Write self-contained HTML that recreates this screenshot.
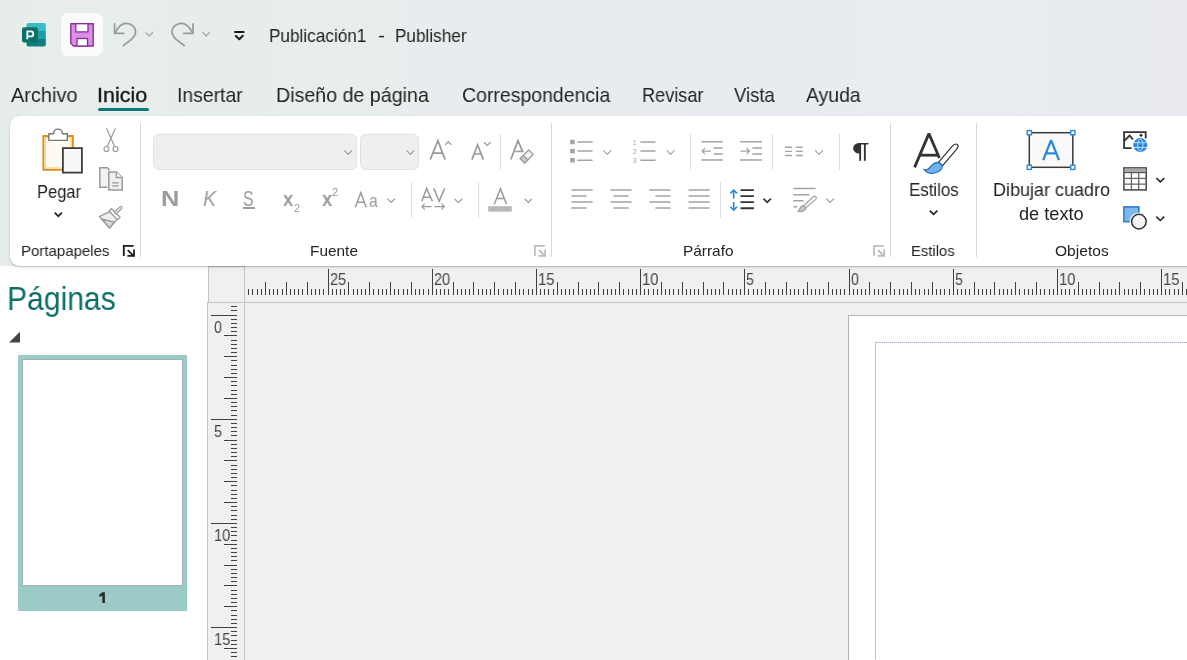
<!DOCTYPE html>
<html><head><meta charset="utf-8">
<style>
*{margin:0;padding:0;box-sizing:border-box}
html,body{width:1187px;height:660px;overflow:hidden;font-family:"Liberation Sans",sans-serif;color:#242424}
body{position:relative;background:linear-gradient(90deg,#e7eeea 0%,#e8ecee 40%,#e8ecf0 60%,#e9ebf0 100%)}
.a{position:absolute}
.t{position:absolute;white-space:nowrap;line-height:1;transform-origin:0 0;will-change:transform}
svg{position:absolute;overflow:visible;will-change:transform}
#ribbon{position:absolute;left:10px;top:116px;width:1200px;height:150px;background:#fff;border-radius:9px;box-shadow:0 0 1px rgba(0,0,0,.16),0 1px 1.5px rgba(0,0,0,.2),0 2px 5px rgba(0,0,0,.07)}
.sep{position:absolute;width:1px;background:#d9d9d9}

</style></head><body>
<div class="a" style="left:61px;top:13px;width:42px;height:43px;background:#fbfbfb;border-radius:7px"></div>
<div class="t" style="left:268.98px;top:26.51px;font-size:18.17px;font-weight:normal;font-style:normal;color:#242424;transform:scaleX(0.9458);">Publicación1</div>
<div class="t" style="left:377.64px;top:26.51px;font-size:18.17px;font-weight:normal;font-style:normal;color:#242424;transform:scaleX(1.1682);">-</div>
<div class="t" style="left:394.78px;top:26.51px;font-size:18.17px;font-weight:normal;font-style:normal;color:#242424;transform:scaleX(0.9453);">Publisher</div>
<div class="t" style="left:11.15px;top:85.31px;font-size:20.06px;font-weight:normal;font-style:normal;color:#242424;transform:scaleX(0.9941);">Archivo</div>
<div class="t" style="left:176.81px;top:85.31px;font-size:20.06px;font-weight:normal;font-style:normal;color:#242424;transform:scaleX(0.9660);">Insertar</div>
<div class="t" style="left:275.78px;top:85.31px;font-size:20.06px;font-weight:normal;font-style:normal;color:#242424;transform:scaleX(0.9793);">Diseño de página</div>
<div class="t" style="left:462.23px;top:85.31px;font-size:20.06px;font-weight:normal;font-style:normal;color:#242424;transform:scaleX(0.9711);">Correspondencia</div>
<div class="t" style="left:641.50px;top:85.31px;font-size:20.06px;font-weight:normal;font-style:normal;color:#242424;transform:scaleX(0.9040);">Revisar</div>
<div class="t" style="left:733.51px;top:85.31px;font-size:20.06px;font-weight:normal;font-style:normal;color:#242424;transform:scaleX(0.9213);">Vista</div>
<div class="t" style="left:805.85px;top:85.31px;font-size:20.06px;font-weight:normal;font-style:normal;color:#242424;transform:scaleX(0.9679);">Ayuda</div>
<div class="t" style="left:96.61px;top:85.31px;font-size:20.06px;font-weight:normal;font-style:normal;color:#1b1b1b;transform:scaleX(1.0742);-webkit-text-stroke:0.35px #1b1b1b;">Inicio</div>
<div class="a" style="left:98px;top:107.5px;width:51px;height:3px;border-radius:2px;background:#0f7a7e"></div>
<div class="a" style="left:0;top:266px;width:1187px;height:394px;background:#fff"></div>
<div class="a" style="left:245px;top:303px;width:942px;height:357px;background:#f0f0f0"></div>
<div class="a" style="left:848px;top:315px;width:400px;height:400px;background:#fff;border:1px solid #b4b4b4"></div>
<div class="a" style="left:208px;top:266px;width:979px;height:37px;background:#f0f0f0"></div>
<div class="a" style="left:208px;top:266px;width:37px;height:394px;background:#f0f0f0"></div>
<svg width="1187" height="660" style="left:0;top:0" viewBox="0 0 1187 660" shape-rendering="crispEdges">
<rect x="208" y="266" width="1" height="37" fill="#c6c6c6"/>
<rect x="207" y="302" width="1" height="358" fill="#c6c6c6"/>
<rect x="244" y="266" width="1" height="394" fill="#c6c6c6"/>
<rect x="208" y="266" width="37" height="1" fill="#c6c6c6"/>
<rect x="207" y="302" width="980" height="1" fill="#c6c6c6"/>
<rect x="875" y="342" width="312" height="1" fill="#d0ebf8"/><rect x="875" y="342" width="1" height="318" fill="#d0ebf8"/><rect x="876" y="342" width="1" height="1" fill="#a3a8c6"/><rect x="878" y="342" width="1" height="1" fill="#a3a8c6"/><rect x="880" y="342" width="1" height="1" fill="#a3a8c6"/><rect x="882" y="342" width="1" height="1" fill="#a3a8c6"/><rect x="884" y="342" width="1" height="1" fill="#a3a8c6"/><rect x="886" y="342" width="1" height="1" fill="#a3a8c6"/><rect x="888" y="342" width="1" height="1" fill="#a3a8c6"/><rect x="890" y="342" width="1" height="1" fill="#a3a8c6"/><rect x="892" y="342" width="1" height="1" fill="#a3a8c6"/><rect x="894" y="342" width="1" height="1" fill="#a3a8c6"/><rect x="896" y="342" width="1" height="1" fill="#a3a8c6"/><rect x="898" y="342" width="1" height="1" fill="#a3a8c6"/><rect x="900" y="342" width="1" height="1" fill="#a3a8c6"/><rect x="902" y="342" width="1" height="1" fill="#a3a8c6"/><rect x="904" y="342" width="1" height="1" fill="#a3a8c6"/><rect x="906" y="342" width="1" height="1" fill="#a3a8c6"/><rect x="908" y="342" width="1" height="1" fill="#a3a8c6"/><rect x="910" y="342" width="1" height="1" fill="#a3a8c6"/><rect x="912" y="342" width="1" height="1" fill="#a3a8c6"/><rect x="914" y="342" width="1" height="1" fill="#a3a8c6"/><rect x="916" y="342" width="1" height="1" fill="#a3a8c6"/><rect x="918" y="342" width="1" height="1" fill="#a3a8c6"/><rect x="920" y="342" width="1" height="1" fill="#a3a8c6"/><rect x="922" y="342" width="1" height="1" fill="#a3a8c6"/><rect x="924" y="342" width="1" height="1" fill="#a3a8c6"/><rect x="926" y="342" width="1" height="1" fill="#a3a8c6"/><rect x="928" y="342" width="1" height="1" fill="#a3a8c6"/><rect x="930" y="342" width="1" height="1" fill="#a3a8c6"/><rect x="932" y="342" width="1" height="1" fill="#a3a8c6"/><rect x="934" y="342" width="1" height="1" fill="#a3a8c6"/><rect x="936" y="342" width="1" height="1" fill="#a3a8c6"/><rect x="938" y="342" width="1" height="1" fill="#a3a8c6"/><rect x="940" y="342" width="1" height="1" fill="#a3a8c6"/><rect x="942" y="342" width="1" height="1" fill="#a3a8c6"/><rect x="944" y="342" width="1" height="1" fill="#a3a8c6"/><rect x="946" y="342" width="1" height="1" fill="#a3a8c6"/><rect x="948" y="342" width="1" height="1" fill="#a3a8c6"/><rect x="950" y="342" width="1" height="1" fill="#a3a8c6"/><rect x="952" y="342" width="1" height="1" fill="#a3a8c6"/><rect x="954" y="342" width="1" height="1" fill="#a3a8c6"/><rect x="956" y="342" width="1" height="1" fill="#a3a8c6"/><rect x="958" y="342" width="1" height="1" fill="#a3a8c6"/><rect x="960" y="342" width="1" height="1" fill="#a3a8c6"/><rect x="962" y="342" width="1" height="1" fill="#a3a8c6"/><rect x="964" y="342" width="1" height="1" fill="#a3a8c6"/><rect x="966" y="342" width="1" height="1" fill="#a3a8c6"/><rect x="968" y="342" width="1" height="1" fill="#a3a8c6"/><rect x="970" y="342" width="1" height="1" fill="#a3a8c6"/><rect x="972" y="342" width="1" height="1" fill="#a3a8c6"/><rect x="974" y="342" width="1" height="1" fill="#a3a8c6"/><rect x="976" y="342" width="1" height="1" fill="#a3a8c6"/><rect x="978" y="342" width="1" height="1" fill="#a3a8c6"/><rect x="980" y="342" width="1" height="1" fill="#a3a8c6"/><rect x="982" y="342" width="1" height="1" fill="#a3a8c6"/><rect x="984" y="342" width="1" height="1" fill="#a3a8c6"/><rect x="986" y="342" width="1" height="1" fill="#a3a8c6"/><rect x="988" y="342" width="1" height="1" fill="#a3a8c6"/><rect x="990" y="342" width="1" height="1" fill="#a3a8c6"/><rect x="992" y="342" width="1" height="1" fill="#a3a8c6"/><rect x="994" y="342" width="1" height="1" fill="#a3a8c6"/><rect x="996" y="342" width="1" height="1" fill="#a3a8c6"/><rect x="998" y="342" width="1" height="1" fill="#a3a8c6"/><rect x="1000" y="342" width="1" height="1" fill="#a3a8c6"/><rect x="1002" y="342" width="1" height="1" fill="#a3a8c6"/><rect x="1004" y="342" width="1" height="1" fill="#a3a8c6"/><rect x="1006" y="342" width="1" height="1" fill="#a3a8c6"/><rect x="1008" y="342" width="1" height="1" fill="#a3a8c6"/><rect x="1010" y="342" width="1" height="1" fill="#a3a8c6"/><rect x="1012" y="342" width="1" height="1" fill="#a3a8c6"/><rect x="1014" y="342" width="1" height="1" fill="#a3a8c6"/><rect x="1016" y="342" width="1" height="1" fill="#a3a8c6"/><rect x="1018" y="342" width="1" height="1" fill="#a3a8c6"/><rect x="1020" y="342" width="1" height="1" fill="#a3a8c6"/><rect x="1022" y="342" width="1" height="1" fill="#a3a8c6"/><rect x="1024" y="342" width="1" height="1" fill="#a3a8c6"/><rect x="1026" y="342" width="1" height="1" fill="#a3a8c6"/><rect x="1028" y="342" width="1" height="1" fill="#a3a8c6"/><rect x="1030" y="342" width="1" height="1" fill="#a3a8c6"/><rect x="1032" y="342" width="1" height="1" fill="#a3a8c6"/><rect x="1034" y="342" width="1" height="1" fill="#a3a8c6"/><rect x="1036" y="342" width="1" height="1" fill="#a3a8c6"/><rect x="1038" y="342" width="1" height="1" fill="#a3a8c6"/><rect x="1040" y="342" width="1" height="1" fill="#a3a8c6"/><rect x="1042" y="342" width="1" height="1" fill="#a3a8c6"/><rect x="1044" y="342" width="1" height="1" fill="#a3a8c6"/><rect x="1046" y="342" width="1" height="1" fill="#a3a8c6"/><rect x="1048" y="342" width="1" height="1" fill="#a3a8c6"/><rect x="1050" y="342" width="1" height="1" fill="#a3a8c6"/><rect x="1052" y="342" width="1" height="1" fill="#a3a8c6"/><rect x="1054" y="342" width="1" height="1" fill="#a3a8c6"/><rect x="1056" y="342" width="1" height="1" fill="#a3a8c6"/><rect x="1058" y="342" width="1" height="1" fill="#a3a8c6"/><rect x="1060" y="342" width="1" height="1" fill="#a3a8c6"/><rect x="1062" y="342" width="1" height="1" fill="#a3a8c6"/><rect x="1064" y="342" width="1" height="1" fill="#a3a8c6"/><rect x="1066" y="342" width="1" height="1" fill="#a3a8c6"/><rect x="1068" y="342" width="1" height="1" fill="#a3a8c6"/><rect x="1070" y="342" width="1" height="1" fill="#a3a8c6"/><rect x="1072" y="342" width="1" height="1" fill="#a3a8c6"/><rect x="1074" y="342" width="1" height="1" fill="#a3a8c6"/><rect x="1076" y="342" width="1" height="1" fill="#a3a8c6"/><rect x="1078" y="342" width="1" height="1" fill="#a3a8c6"/><rect x="1080" y="342" width="1" height="1" fill="#a3a8c6"/><rect x="1082" y="342" width="1" height="1" fill="#a3a8c6"/><rect x="1084" y="342" width="1" height="1" fill="#a3a8c6"/><rect x="1086" y="342" width="1" height="1" fill="#a3a8c6"/><rect x="1088" y="342" width="1" height="1" fill="#a3a8c6"/><rect x="1090" y="342" width="1" height="1" fill="#a3a8c6"/><rect x="1092" y="342" width="1" height="1" fill="#a3a8c6"/><rect x="1094" y="342" width="1" height="1" fill="#a3a8c6"/><rect x="1096" y="342" width="1" height="1" fill="#a3a8c6"/><rect x="1098" y="342" width="1" height="1" fill="#a3a8c6"/><rect x="1100" y="342" width="1" height="1" fill="#a3a8c6"/><rect x="1102" y="342" width="1" height="1" fill="#a3a8c6"/><rect x="1104" y="342" width="1" height="1" fill="#a3a8c6"/><rect x="1106" y="342" width="1" height="1" fill="#a3a8c6"/><rect x="1108" y="342" width="1" height="1" fill="#a3a8c6"/><rect x="1110" y="342" width="1" height="1" fill="#a3a8c6"/><rect x="1112" y="342" width="1" height="1" fill="#a3a8c6"/><rect x="1114" y="342" width="1" height="1" fill="#a3a8c6"/><rect x="1116" y="342" width="1" height="1" fill="#a3a8c6"/><rect x="1118" y="342" width="1" height="1" fill="#a3a8c6"/><rect x="1120" y="342" width="1" height="1" fill="#a3a8c6"/><rect x="1122" y="342" width="1" height="1" fill="#a3a8c6"/><rect x="1124" y="342" width="1" height="1" fill="#a3a8c6"/><rect x="1126" y="342" width="1" height="1" fill="#a3a8c6"/><rect x="1128" y="342" width="1" height="1" fill="#a3a8c6"/><rect x="1130" y="342" width="1" height="1" fill="#a3a8c6"/><rect x="1132" y="342" width="1" height="1" fill="#a3a8c6"/><rect x="1134" y="342" width="1" height="1" fill="#a3a8c6"/><rect x="1136" y="342" width="1" height="1" fill="#a3a8c6"/><rect x="1138" y="342" width="1" height="1" fill="#a3a8c6"/><rect x="1140" y="342" width="1" height="1" fill="#a3a8c6"/><rect x="1142" y="342" width="1" height="1" fill="#a3a8c6"/><rect x="1144" y="342" width="1" height="1" fill="#a3a8c6"/><rect x="1146" y="342" width="1" height="1" fill="#a3a8c6"/><rect x="1148" y="342" width="1" height="1" fill="#a3a8c6"/><rect x="1150" y="342" width="1" height="1" fill="#a3a8c6"/><rect x="1152" y="342" width="1" height="1" fill="#a3a8c6"/><rect x="1154" y="342" width="1" height="1" fill="#a3a8c6"/><rect x="1156" y="342" width="1" height="1" fill="#a3a8c6"/><rect x="1158" y="342" width="1" height="1" fill="#a3a8c6"/><rect x="1160" y="342" width="1" height="1" fill="#a3a8c6"/><rect x="1162" y="342" width="1" height="1" fill="#a3a8c6"/><rect x="1164" y="342" width="1" height="1" fill="#a3a8c6"/><rect x="1166" y="342" width="1" height="1" fill="#a3a8c6"/><rect x="1168" y="342" width="1" height="1" fill="#a3a8c6"/><rect x="1170" y="342" width="1" height="1" fill="#a3a8c6"/><rect x="1172" y="342" width="1" height="1" fill="#a3a8c6"/><rect x="1174" y="342" width="1" height="1" fill="#a3a8c6"/><rect x="1176" y="342" width="1" height="1" fill="#a3a8c6"/><rect x="1178" y="342" width="1" height="1" fill="#a3a8c6"/><rect x="1180" y="342" width="1" height="1" fill="#a3a8c6"/><rect x="1182" y="342" width="1" height="1" fill="#a3a8c6"/><rect x="1184" y="342" width="1" height="1" fill="#a3a8c6"/><rect x="1186" y="342" width="1" height="1" fill="#a3a8c6"/><rect x="875" y="342" width="1" height="1" fill="#a3a8c6"/><rect x="875" y="344" width="1" height="1" fill="#a3a8c6"/><rect x="875" y="346" width="1" height="1" fill="#a3a8c6"/><rect x="875" y="348" width="1" height="1" fill="#a3a8c6"/><rect x="875" y="350" width="1" height="1" fill="#a3a8c6"/><rect x="875" y="352" width="1" height="1" fill="#a3a8c6"/><rect x="875" y="354" width="1" height="1" fill="#a3a8c6"/><rect x="875" y="356" width="1" height="1" fill="#a3a8c6"/><rect x="875" y="358" width="1" height="1" fill="#a3a8c6"/><rect x="875" y="360" width="1" height="1" fill="#a3a8c6"/><rect x="875" y="362" width="1" height="1" fill="#a3a8c6"/><rect x="875" y="364" width="1" height="1" fill="#a3a8c6"/><rect x="875" y="366" width="1" height="1" fill="#a3a8c6"/><rect x="875" y="368" width="1" height="1" fill="#a3a8c6"/><rect x="875" y="370" width="1" height="1" fill="#a3a8c6"/><rect x="875" y="372" width="1" height="1" fill="#a3a8c6"/><rect x="875" y="374" width="1" height="1" fill="#a3a8c6"/><rect x="875" y="376" width="1" height="1" fill="#a3a8c6"/><rect x="875" y="378" width="1" height="1" fill="#a3a8c6"/><rect x="875" y="380" width="1" height="1" fill="#a3a8c6"/><rect x="875" y="382" width="1" height="1" fill="#a3a8c6"/><rect x="875" y="384" width="1" height="1" fill="#a3a8c6"/><rect x="875" y="386" width="1" height="1" fill="#a3a8c6"/><rect x="875" y="388" width="1" height="1" fill="#a3a8c6"/><rect x="875" y="390" width="1" height="1" fill="#a3a8c6"/><rect x="875" y="392" width="1" height="1" fill="#a3a8c6"/><rect x="875" y="394" width="1" height="1" fill="#a3a8c6"/><rect x="875" y="396" width="1" height="1" fill="#a3a8c6"/><rect x="875" y="398" width="1" height="1" fill="#a3a8c6"/><rect x="875" y="400" width="1" height="1" fill="#a3a8c6"/><rect x="875" y="402" width="1" height="1" fill="#a3a8c6"/><rect x="875" y="404" width="1" height="1" fill="#a3a8c6"/><rect x="875" y="406" width="1" height="1" fill="#a3a8c6"/><rect x="875" y="408" width="1" height="1" fill="#a3a8c6"/><rect x="875" y="410" width="1" height="1" fill="#a3a8c6"/><rect x="875" y="412" width="1" height="1" fill="#a3a8c6"/><rect x="875" y="414" width="1" height="1" fill="#a3a8c6"/><rect x="875" y="416" width="1" height="1" fill="#a3a8c6"/><rect x="875" y="418" width="1" height="1" fill="#a3a8c6"/><rect x="875" y="420" width="1" height="1" fill="#a3a8c6"/><rect x="875" y="422" width="1" height="1" fill="#a3a8c6"/><rect x="875" y="424" width="1" height="1" fill="#a3a8c6"/><rect x="875" y="426" width="1" height="1" fill="#a3a8c6"/><rect x="875" y="428" width="1" height="1" fill="#a3a8c6"/><rect x="875" y="430" width="1" height="1" fill="#a3a8c6"/><rect x="875" y="432" width="1" height="1" fill="#a3a8c6"/><rect x="875" y="434" width="1" height="1" fill="#a3a8c6"/><rect x="875" y="436" width="1" height="1" fill="#a3a8c6"/><rect x="875" y="438" width="1" height="1" fill="#a3a8c6"/><rect x="875" y="440" width="1" height="1" fill="#a3a8c6"/><rect x="875" y="442" width="1" height="1" fill="#a3a8c6"/><rect x="875" y="444" width="1" height="1" fill="#a3a8c6"/><rect x="875" y="446" width="1" height="1" fill="#a3a8c6"/><rect x="875" y="448" width="1" height="1" fill="#a3a8c6"/><rect x="875" y="450" width="1" height="1" fill="#a3a8c6"/><rect x="875" y="452" width="1" height="1" fill="#a3a8c6"/><rect x="875" y="454" width="1" height="1" fill="#a3a8c6"/><rect x="875" y="456" width="1" height="1" fill="#a3a8c6"/><rect x="875" y="458" width="1" height="1" fill="#a3a8c6"/><rect x="875" y="460" width="1" height="1" fill="#a3a8c6"/><rect x="875" y="462" width="1" height="1" fill="#a3a8c6"/><rect x="875" y="464" width="1" height="1" fill="#a3a8c6"/><rect x="875" y="466" width="1" height="1" fill="#a3a8c6"/><rect x="875" y="468" width="1" height="1" fill="#a3a8c6"/><rect x="875" y="470" width="1" height="1" fill="#a3a8c6"/><rect x="875" y="472" width="1" height="1" fill="#a3a8c6"/><rect x="875" y="474" width="1" height="1" fill="#a3a8c6"/><rect x="875" y="476" width="1" height="1" fill="#a3a8c6"/><rect x="875" y="478" width="1" height="1" fill="#a3a8c6"/><rect x="875" y="480" width="1" height="1" fill="#a3a8c6"/><rect x="875" y="482" width="1" height="1" fill="#a3a8c6"/><rect x="875" y="484" width="1" height="1" fill="#a3a8c6"/><rect x="875" y="486" width="1" height="1" fill="#a3a8c6"/><rect x="875" y="488" width="1" height="1" fill="#a3a8c6"/><rect x="875" y="490" width="1" height="1" fill="#a3a8c6"/><rect x="875" y="492" width="1" height="1" fill="#a3a8c6"/><rect x="875" y="494" width="1" height="1" fill="#a3a8c6"/><rect x="875" y="496" width="1" height="1" fill="#a3a8c6"/><rect x="875" y="498" width="1" height="1" fill="#a3a8c6"/><rect x="875" y="500" width="1" height="1" fill="#a3a8c6"/><rect x="875" y="502" width="1" height="1" fill="#a3a8c6"/><rect x="875" y="504" width="1" height="1" fill="#a3a8c6"/><rect x="875" y="506" width="1" height="1" fill="#a3a8c6"/><rect x="875" y="508" width="1" height="1" fill="#a3a8c6"/><rect x="875" y="510" width="1" height="1" fill="#a3a8c6"/><rect x="875" y="512" width="1" height="1" fill="#a3a8c6"/><rect x="875" y="514" width="1" height="1" fill="#a3a8c6"/><rect x="875" y="516" width="1" height="1" fill="#a3a8c6"/><rect x="875" y="518" width="1" height="1" fill="#a3a8c6"/><rect x="875" y="520" width="1" height="1" fill="#a3a8c6"/><rect x="875" y="522" width="1" height="1" fill="#a3a8c6"/><rect x="875" y="524" width="1" height="1" fill="#a3a8c6"/><rect x="875" y="526" width="1" height="1" fill="#a3a8c6"/><rect x="875" y="528" width="1" height="1" fill="#a3a8c6"/><rect x="875" y="530" width="1" height="1" fill="#a3a8c6"/><rect x="875" y="532" width="1" height="1" fill="#a3a8c6"/><rect x="875" y="534" width="1" height="1" fill="#a3a8c6"/><rect x="875" y="536" width="1" height="1" fill="#a3a8c6"/><rect x="875" y="538" width="1" height="1" fill="#a3a8c6"/><rect x="875" y="540" width="1" height="1" fill="#a3a8c6"/><rect x="875" y="542" width="1" height="1" fill="#a3a8c6"/><rect x="875" y="544" width="1" height="1" fill="#a3a8c6"/><rect x="875" y="546" width="1" height="1" fill="#a3a8c6"/><rect x="875" y="548" width="1" height="1" fill="#a3a8c6"/><rect x="875" y="550" width="1" height="1" fill="#a3a8c6"/><rect x="875" y="552" width="1" height="1" fill="#a3a8c6"/><rect x="875" y="554" width="1" height="1" fill="#a3a8c6"/><rect x="875" y="556" width="1" height="1" fill="#a3a8c6"/><rect x="875" y="558" width="1" height="1" fill="#a3a8c6"/><rect x="875" y="560" width="1" height="1" fill="#a3a8c6"/><rect x="875" y="562" width="1" height="1" fill="#a3a8c6"/><rect x="875" y="564" width="1" height="1" fill="#a3a8c6"/><rect x="875" y="566" width="1" height="1" fill="#a3a8c6"/><rect x="875" y="568" width="1" height="1" fill="#a3a8c6"/><rect x="875" y="570" width="1" height="1" fill="#a3a8c6"/><rect x="875" y="572" width="1" height="1" fill="#a3a8c6"/><rect x="875" y="574" width="1" height="1" fill="#a3a8c6"/><rect x="875" y="576" width="1" height="1" fill="#a3a8c6"/><rect x="875" y="578" width="1" height="1" fill="#a3a8c6"/><rect x="875" y="580" width="1" height="1" fill="#a3a8c6"/><rect x="875" y="582" width="1" height="1" fill="#a3a8c6"/><rect x="875" y="584" width="1" height="1" fill="#a3a8c6"/><rect x="875" y="586" width="1" height="1" fill="#a3a8c6"/><rect x="875" y="588" width="1" height="1" fill="#a3a8c6"/><rect x="875" y="590" width="1" height="1" fill="#a3a8c6"/><rect x="875" y="592" width="1" height="1" fill="#a3a8c6"/><rect x="875" y="594" width="1" height="1" fill="#a3a8c6"/><rect x="875" y="596" width="1" height="1" fill="#a3a8c6"/><rect x="875" y="598" width="1" height="1" fill="#a3a8c6"/><rect x="875" y="600" width="1" height="1" fill="#a3a8c6"/><rect x="875" y="602" width="1" height="1" fill="#a3a8c6"/><rect x="875" y="604" width="1" height="1" fill="#a3a8c6"/><rect x="875" y="606" width="1" height="1" fill="#a3a8c6"/><rect x="875" y="608" width="1" height="1" fill="#a3a8c6"/><rect x="875" y="610" width="1" height="1" fill="#a3a8c6"/><rect x="875" y="612" width="1" height="1" fill="#a3a8c6"/><rect x="875" y="614" width="1" height="1" fill="#a3a8c6"/><rect x="875" y="616" width="1" height="1" fill="#a3a8c6"/><rect x="875" y="618" width="1" height="1" fill="#a3a8c6"/><rect x="875" y="620" width="1" height="1" fill="#a3a8c6"/><rect x="875" y="622" width="1" height="1" fill="#a3a8c6"/><rect x="875" y="624" width="1" height="1" fill="#a3a8c6"/><rect x="875" y="626" width="1" height="1" fill="#a3a8c6"/><rect x="875" y="628" width="1" height="1" fill="#a3a8c6"/><rect x="875" y="630" width="1" height="1" fill="#a3a8c6"/><rect x="875" y="632" width="1" height="1" fill="#a3a8c6"/><rect x="875" y="634" width="1" height="1" fill="#a3a8c6"/><rect x="875" y="636" width="1" height="1" fill="#a3a8c6"/><rect x="875" y="638" width="1" height="1" fill="#a3a8c6"/><rect x="875" y="640" width="1" height="1" fill="#a3a8c6"/><rect x="875" y="642" width="1" height="1" fill="#a3a8c6"/><rect x="875" y="644" width="1" height="1" fill="#a3a8c6"/><rect x="875" y="646" width="1" height="1" fill="#a3a8c6"/><rect x="875" y="648" width="1" height="1" fill="#a3a8c6"/><rect x="875" y="650" width="1" height="1" fill="#a3a8c6"/><rect x="875" y="652" width="1" height="1" fill="#a3a8c6"/><rect x="875" y="654" width="1" height="1" fill="#a3a8c6"/><rect x="875" y="656" width="1" height="1" fill="#a3a8c6"/><rect x="875" y="658" width="1" height="1" fill="#a3a8c6"/>
<g fill="#3f3f3f"><rect x="248" y="289" width="1" height="6"/><rect x="252" y="289" width="1" height="6"/><rect x="257" y="289" width="1" height="6"/><rect x="261" y="289" width="1" height="6"/><rect x="265" y="282" width="1" height="13"/><rect x="269" y="289" width="1" height="6"/><rect x="273" y="289" width="1" height="6"/><rect x="277" y="289" width="1" height="6"/><rect x="282" y="289" width="1" height="6"/><rect x="286" y="282" width="1" height="13"/><rect x="290" y="289" width="1" height="6"/><rect x="294" y="289" width="1" height="6"/><rect x="298" y="289" width="1" height="6"/><rect x="302" y="289" width="1" height="6"/><rect x="307" y="282" width="1" height="13"/><rect x="311" y="289" width="1" height="6"/><rect x="315" y="289" width="1" height="6"/><rect x="319" y="289" width="1" height="6"/><rect x="323" y="289" width="1" height="6"/><rect x="328" y="269" width="1" height="26"/><rect x="332" y="289" width="1" height="6"/><rect x="336" y="289" width="1" height="6"/><rect x="340" y="289" width="1" height="6"/><rect x="344" y="289" width="1" height="6"/><rect x="348" y="282" width="1" height="13"/><rect x="353" y="289" width="1" height="6"/><rect x="357" y="289" width="1" height="6"/><rect x="361" y="289" width="1" height="6"/><rect x="365" y="289" width="1" height="6"/><rect x="369" y="282" width="1" height="13"/><rect x="373" y="289" width="1" height="6"/><rect x="378" y="289" width="1" height="6"/><rect x="382" y="289" width="1" height="6"/><rect x="386" y="289" width="1" height="6"/><rect x="390" y="282" width="1" height="13"/><rect x="394" y="289" width="1" height="6"/><rect x="398" y="289" width="1" height="6"/><rect x="403" y="289" width="1" height="6"/><rect x="407" y="289" width="1" height="6"/><rect x="411" y="282" width="1" height="13"/><rect x="415" y="289" width="1" height="6"/><rect x="419" y="289" width="1" height="6"/><rect x="423" y="289" width="1" height="6"/><rect x="428" y="289" width="1" height="6"/><rect x="432" y="269" width="1" height="26"/><rect x="436" y="289" width="1" height="6"/><rect x="440" y="289" width="1" height="6"/><rect x="444" y="289" width="1" height="6"/><rect x="448" y="289" width="1" height="6"/><rect x="453" y="282" width="1" height="13"/><rect x="457" y="289" width="1" height="6"/><rect x="461" y="289" width="1" height="6"/><rect x="465" y="289" width="1" height="6"/><rect x="469" y="289" width="1" height="6"/><rect x="473" y="282" width="1" height="13"/><rect x="478" y="289" width="1" height="6"/><rect x="482" y="289" width="1" height="6"/><rect x="486" y="289" width="1" height="6"/><rect x="490" y="289" width="1" height="6"/><rect x="494" y="282" width="1" height="13"/><rect x="498" y="289" width="1" height="6"/><rect x="503" y="289" width="1" height="6"/><rect x="507" y="289" width="1" height="6"/><rect x="511" y="289" width="1" height="6"/><rect x="515" y="282" width="1" height="13"/><rect x="519" y="289" width="1" height="6"/><rect x="523" y="289" width="1" height="6"/><rect x="528" y="289" width="1" height="6"/><rect x="532" y="289" width="1" height="6"/><rect x="536" y="269" width="1" height="26"/><rect x="540" y="289" width="1" height="6"/><rect x="544" y="289" width="1" height="6"/><rect x="548" y="289" width="1" height="6"/><rect x="553" y="289" width="1" height="6"/><rect x="557" y="282" width="1" height="13"/><rect x="561" y="289" width="1" height="6"/><rect x="565" y="289" width="1" height="6"/><rect x="569" y="289" width="1" height="6"/><rect x="573" y="289" width="1" height="6"/><rect x="578" y="282" width="1" height="13"/><rect x="582" y="289" width="1" height="6"/><rect x="586" y="289" width="1" height="6"/><rect x="590" y="289" width="1" height="6"/><rect x="594" y="289" width="1" height="6"/><rect x="598" y="282" width="1" height="13"/><rect x="603" y="289" width="1" height="6"/><rect x="607" y="289" width="1" height="6"/><rect x="611" y="289" width="1" height="6"/><rect x="615" y="289" width="1" height="6"/><rect x="619" y="282" width="1" height="13"/><rect x="623" y="289" width="1" height="6"/><rect x="628" y="289" width="1" height="6"/><rect x="632" y="289" width="1" height="6"/><rect x="636" y="289" width="1" height="6"/><rect x="640" y="269" width="1" height="26"/><rect x="644" y="289" width="1" height="6"/><rect x="648" y="289" width="1" height="6"/><rect x="653" y="289" width="1" height="6"/><rect x="657" y="289" width="1" height="6"/><rect x="661" y="282" width="1" height="13"/><rect x="665" y="289" width="1" height="6"/><rect x="669" y="289" width="1" height="6"/><rect x="673" y="289" width="1" height="6"/><rect x="678" y="289" width="1" height="6"/><rect x="682" y="282" width="1" height="13"/><rect x="686" y="289" width="1" height="6"/><rect x="690" y="289" width="1" height="6"/><rect x="694" y="289" width="1" height="6"/><rect x="698" y="289" width="1" height="6"/><rect x="703" y="282" width="1" height="13"/><rect x="707" y="289" width="1" height="6"/><rect x="711" y="289" width="1" height="6"/><rect x="715" y="289" width="1" height="6"/><rect x="719" y="289" width="1" height="6"/><rect x="723" y="282" width="1" height="13"/><rect x="728" y="289" width="1" height="6"/><rect x="732" y="289" width="1" height="6"/><rect x="736" y="289" width="1" height="6"/><rect x="740" y="289" width="1" height="6"/><rect x="744" y="269" width="1" height="26"/><rect x="748" y="289" width="1" height="6"/><rect x="753" y="289" width="1" height="6"/><rect x="757" y="289" width="1" height="6"/><rect x="761" y="289" width="1" height="6"/><rect x="765" y="282" width="1" height="13"/><rect x="769" y="289" width="1" height="6"/><rect x="773" y="289" width="1" height="6"/><rect x="778" y="289" width="1" height="6"/><rect x="782" y="289" width="1" height="6"/><rect x="786" y="282" width="1" height="13"/><rect x="790" y="289" width="1" height="6"/><rect x="794" y="289" width="1" height="6"/><rect x="798" y="289" width="1" height="6"/><rect x="803" y="289" width="1" height="6"/><rect x="807" y="282" width="1" height="13"/><rect x="811" y="289" width="1" height="6"/><rect x="815" y="289" width="1" height="6"/><rect x="819" y="289" width="1" height="6"/><rect x="823" y="289" width="1" height="6"/><rect x="828" y="282" width="1" height="13"/><rect x="832" y="289" width="1" height="6"/><rect x="836" y="289" width="1" height="6"/><rect x="840" y="289" width="1" height="6"/><rect x="844" y="289" width="1" height="6"/><rect x="849" y="269" width="1" height="26"/><rect x="853" y="289" width="1" height="6"/><rect x="857" y="289" width="1" height="6"/><rect x="861" y="289" width="1" height="6"/><rect x="865" y="289" width="1" height="6"/><rect x="869" y="282" width="1" height="13"/><rect x="874" y="289" width="1" height="6"/><rect x="878" y="289" width="1" height="6"/><rect x="882" y="289" width="1" height="6"/><rect x="886" y="289" width="1" height="6"/><rect x="890" y="282" width="1" height="13"/><rect x="894" y="289" width="1" height="6"/><rect x="899" y="289" width="1" height="6"/><rect x="903" y="289" width="1" height="6"/><rect x="907" y="289" width="1" height="6"/><rect x="911" y="282" width="1" height="13"/><rect x="915" y="289" width="1" height="6"/><rect x="919" y="289" width="1" height="6"/><rect x="924" y="289" width="1" height="6"/><rect x="928" y="289" width="1" height="6"/><rect x="932" y="282" width="1" height="13"/><rect x="936" y="289" width="1" height="6"/><rect x="940" y="289" width="1" height="6"/><rect x="944" y="289" width="1" height="6"/><rect x="949" y="289" width="1" height="6"/><rect x="953" y="269" width="1" height="26"/><rect x="957" y="289" width="1" height="6"/><rect x="961" y="289" width="1" height="6"/><rect x="965" y="289" width="1" height="6"/><rect x="969" y="289" width="1" height="6"/><rect x="974" y="282" width="1" height="13"/><rect x="978" y="289" width="1" height="6"/><rect x="982" y="289" width="1" height="6"/><rect x="986" y="289" width="1" height="6"/><rect x="990" y="289" width="1" height="6"/><rect x="994" y="282" width="1" height="13"/><rect x="999" y="289" width="1" height="6"/><rect x="1003" y="289" width="1" height="6"/><rect x="1007" y="289" width="1" height="6"/><rect x="1011" y="289" width="1" height="6"/><rect x="1015" y="282" width="1" height="13"/><rect x="1019" y="289" width="1" height="6"/><rect x="1024" y="289" width="1" height="6"/><rect x="1028" y="289" width="1" height="6"/><rect x="1032" y="289" width="1" height="6"/><rect x="1036" y="282" width="1" height="13"/><rect x="1040" y="289" width="1" height="6"/><rect x="1044" y="289" width="1" height="6"/><rect x="1049" y="289" width="1" height="6"/><rect x="1053" y="289" width="1" height="6"/><rect x="1057" y="269" width="1" height="26"/><rect x="1061" y="289" width="1" height="6"/><rect x="1065" y="289" width="1" height="6"/><rect x="1069" y="289" width="1" height="6"/><rect x="1074" y="289" width="1" height="6"/><rect x="1078" y="282" width="1" height="13"/><rect x="1082" y="289" width="1" height="6"/><rect x="1086" y="289" width="1" height="6"/><rect x="1090" y="289" width="1" height="6"/><rect x="1094" y="289" width="1" height="6"/><rect x="1099" y="282" width="1" height="13"/><rect x="1103" y="289" width="1" height="6"/><rect x="1107" y="289" width="1" height="6"/><rect x="1111" y="289" width="1" height="6"/><rect x="1115" y="289" width="1" height="6"/><rect x="1119" y="282" width="1" height="13"/><rect x="1124" y="289" width="1" height="6"/><rect x="1128" y="289" width="1" height="6"/><rect x="1132" y="289" width="1" height="6"/><rect x="1136" y="289" width="1" height="6"/><rect x="1140" y="282" width="1" height="13"/><rect x="1144" y="289" width="1" height="6"/><rect x="1149" y="289" width="1" height="6"/><rect x="1153" y="289" width="1" height="6"/><rect x="1157" y="289" width="1" height="6"/><rect x="1161" y="269" width="1" height="26"/><rect x="1165" y="289" width="1" height="6"/><rect x="1169" y="289" width="1" height="6"/><rect x="1174" y="289" width="1" height="6"/><rect x="1178" y="289" width="1" height="6"/><rect x="1182" y="282" width="1" height="13"/><rect x="1186" y="289" width="1" height="6"/><rect x="231" y="306" width="6" height="1"/><rect x="231" y="310" width="6" height="1"/><rect x="211" y="315" width="26" height="1"/><rect x="231" y="319" width="6" height="1"/><rect x="231" y="323" width="6" height="1"/><rect x="231" y="327" width="6" height="1"/><rect x="231" y="331" width="6" height="1"/><rect x="224" y="335" width="13" height="1"/><rect x="231" y="340" width="6" height="1"/><rect x="231" y="344" width="6" height="1"/><rect x="231" y="348" width="6" height="1"/><rect x="231" y="352" width="6" height="1"/><rect x="224" y="356" width="13" height="1"/><rect x="231" y="360" width="6" height="1"/><rect x="231" y="365" width="6" height="1"/><rect x="231" y="369" width="6" height="1"/><rect x="231" y="373" width="6" height="1"/><rect x="224" y="377" width="13" height="1"/><rect x="231" y="381" width="6" height="1"/><rect x="231" y="385" width="6" height="1"/><rect x="231" y="390" width="6" height="1"/><rect x="231" y="394" width="6" height="1"/><rect x="224" y="398" width="13" height="1"/><rect x="231" y="402" width="6" height="1"/><rect x="231" y="406" width="6" height="1"/><rect x="231" y="410" width="6" height="1"/><rect x="231" y="415" width="6" height="1"/><rect x="211" y="419" width="26" height="1"/><rect x="231" y="423" width="6" height="1"/><rect x="231" y="427" width="6" height="1"/><rect x="231" y="431" width="6" height="1"/><rect x="231" y="435" width="6" height="1"/><rect x="224" y="440" width="13" height="1"/><rect x="231" y="444" width="6" height="1"/><rect x="231" y="448" width="6" height="1"/><rect x="231" y="452" width="6" height="1"/><rect x="231" y="456" width="6" height="1"/><rect x="224" y="460" width="13" height="1"/><rect x="231" y="465" width="6" height="1"/><rect x="231" y="469" width="6" height="1"/><rect x="231" y="473" width="6" height="1"/><rect x="231" y="477" width="6" height="1"/><rect x="224" y="481" width="13" height="1"/><rect x="231" y="485" width="6" height="1"/><rect x="231" y="490" width="6" height="1"/><rect x="231" y="494" width="6" height="1"/><rect x="231" y="498" width="6" height="1"/><rect x="224" y="502" width="13" height="1"/><rect x="231" y="506" width="6" height="1"/><rect x="231" y="510" width="6" height="1"/><rect x="231" y="515" width="6" height="1"/><rect x="231" y="519" width="6" height="1"/><rect x="211" y="523" width="26" height="1"/><rect x="231" y="527" width="6" height="1"/><rect x="231" y="531" width="6" height="1"/><rect x="231" y="535" width="6" height="1"/><rect x="231" y="540" width="6" height="1"/><rect x="224" y="544" width="13" height="1"/><rect x="231" y="548" width="6" height="1"/><rect x="231" y="552" width="6" height="1"/><rect x="231" y="556" width="6" height="1"/><rect x="231" y="560" width="6" height="1"/><rect x="224" y="565" width="13" height="1"/><rect x="231" y="569" width="6" height="1"/><rect x="231" y="573" width="6" height="1"/><rect x="231" y="577" width="6" height="1"/><rect x="231" y="581" width="6" height="1"/><rect x="224" y="585" width="13" height="1"/><rect x="231" y="590" width="6" height="1"/><rect x="231" y="594" width="6" height="1"/><rect x="231" y="598" width="6" height="1"/><rect x="231" y="602" width="6" height="1"/><rect x="224" y="606" width="13" height="1"/><rect x="231" y="610" width="6" height="1"/><rect x="231" y="615" width="6" height="1"/><rect x="231" y="619" width="6" height="1"/><rect x="231" y="623" width="6" height="1"/><rect x="211" y="627" width="26" height="1"/><rect x="231" y="631" width="6" height="1"/><rect x="231" y="635" width="6" height="1"/><rect x="231" y="640" width="6" height="1"/><rect x="231" y="644" width="6" height="1"/><rect x="224" y="648" width="13" height="1"/><rect x="231" y="652" width="6" height="1"/><rect x="231" y="656" width="6" height="1"/></g>
</svg>
<div class="t" style="left:7.12px;top:283.40px;font-size:32.70px;font-weight:normal;font-style:normal;color:#0e6f66;transform:scaleX(0.9206);">Páginas</div>
<svg width="1187" height="660" style="left:0;top:0"><path d="M9,342.5 L20,331.8 V342.5 Z" fill="#444"/></svg>
<div class="a" style="left:18px;top:355px;width:169px;height:256px;background:#9ccbc7"></div>
<div class="a" style="left:22px;top:359px;width:161px;height:227px;background:#fff;border:1px solid #9fb2b0"></div>
<svg width="1187" height="660" style="left:0;top:0"><path d="M102.3,592.3 H104.9 V602.9 H102.3 V595.6 L99.4,597.2 V594.6 Z" fill="#2a2a2a"/></svg>
<div class="t" style="left:329.97px;top:271.65px;font-size:15.76px;font-weight:normal;font-style:normal;color:#444;transform:scaleX(0.9207);">25</div>
<div class="t" style="left:433.98px;top:271.65px;font-size:15.76px;font-weight:normal;font-style:normal;color:#444;transform:scaleX(0.9185);">20</div>
<div class="t" style="left:537.58px;top:271.65px;font-size:15.76px;font-weight:normal;font-style:normal;color:#444;transform:scaleX(0.9438);">15</div>
<div class="t" style="left:641.59px;top:271.65px;font-size:15.76px;font-weight:normal;font-style:normal;color:#444;transform:scaleX(0.9415);">10</div>
<div class="t" style="left:746.13px;top:271.65px;font-size:15.76px;font-weight:normal;font-style:normal;color:#444;transform:scaleX(0.9084);">5</div>
<div class="t" style="left:851.13px;top:271.65px;font-size:15.76px;font-weight:normal;font-style:normal;color:#444;transform:scaleX(0.9036);">0</div>
<div class="t" style="left:955.13px;top:271.65px;font-size:15.76px;font-weight:normal;font-style:normal;color:#444;transform:scaleX(0.9084);">5</div>
<div class="t" style="left:1058.59px;top:271.65px;font-size:15.76px;font-weight:normal;font-style:normal;color:#444;transform:scaleX(0.9415);">10</div>
<div class="t" style="left:1162.58px;top:271.65px;font-size:15.76px;font-weight:normal;font-style:normal;color:#444;transform:scaleX(0.9438);">15</div>
<div class="t" style="left:214.33px;top:319.87px;font-size:15.62px;font-weight:normal;font-style:normal;color:#444;transform:scaleX(0.9119);">0</div>
<div class="t" style="left:214.33px;top:423.87px;font-size:15.62px;font-weight:normal;font-style:normal;color:#444;transform:scaleX(0.9167);">5</div>
<div class="t" style="left:213.80px;top:527.87px;font-size:15.62px;font-weight:normal;font-style:normal;color:#444;transform:scaleX(0.9373);">10</div>
<div class="t" style="left:213.80px;top:631.87px;font-size:15.62px;font-weight:normal;font-style:normal;color:#444;transform:scaleX(0.9396);">15</div>
<div id="ribbon"></div>
<div class="sep" style="left:140px;top:123px;height:134px"></div>
<div class="sep" style="left:551px;top:123px;height:134px"></div>
<div class="sep" style="left:890px;top:123px;height:134px"></div>
<div class="sep" style="left:976px;top:123px;height:134px"></div>
<div class="t" style="left:20.96px;top:242.95px;font-size:15.41px;font-weight:normal;font-style:normal;color:#242424;transform:scaleX(0.9744);">Portapapeles</div>
<div class="t" style="left:309.63px;top:242.95px;font-size:15.41px;font-weight:normal;font-style:normal;color:#242424;">Fuente</div>
<div class="t" style="left:682.53px;top:242.95px;font-size:15.41px;font-weight:normal;font-style:normal;color:#242424;">Párrafo</div>
<div class="t" style="left:910.88px;top:242.95px;font-size:15.41px;font-weight:normal;font-style:normal;color:#242424;transform:scaleX(0.9618);">Estilos</div>
<div class="t" style="left:1055.16px;top:242.95px;font-size:15.41px;font-weight:normal;font-style:normal;color:#242424;transform:scaleX(1.0107);">Objetos</div>
<div class="t" style="left:37.04px;top:183.09px;font-size:18.31px;font-weight:normal;font-style:normal;color:#242424;transform:scaleX(0.9008);">Pegar</div>
<div class="t" style="left:908.91px;top:180.72px;font-size:18.75px;font-weight:normal;font-style:normal;color:#242424;transform:scaleX(0.8997);">Estilos</div>
<div class="t" style="left:992.51px;top:181.21px;font-size:18.17px;font-weight:normal;font-style:normal;color:#242424;transform:scaleX(0.9912);">Dibujar cuadro</div>
<div class="t" style="left:1019.13px;top:205.01px;font-size:18.17px;font-weight:normal;font-style:normal;color:#242424;">de texto</div>
<svg width="1187" height="660" style="left:0;top:0" viewBox="0 0 1187 660">
<!-- Publisher logo -->
<path d="M26.5,25.3 a2.3,2.3 0 0 1 2.3,-2.3 H43.5 a2.3,2.3 0 0 1 2.3,2.3 V31 H26.5 Z" fill="#3bbcc5"/>
<rect x="26.5" y="31" width="19.3" height="8" fill="#1d9ea6"/>
<path d="M26.5,39 H45.8 V44.3 a2.3,2.3 0 0 1 -2.3,2.3 H28.8 a2.3,2.3 0 0 1 -2.3,-2.3 Z" fill="#0f7d83"/>
<rect x="22" y="27.3" width="16" height="15.2" rx="2" fill="#0b7168"/>
<path d="M27.3,39.2 V31.4 H30.8 C34.2,31.4 34.2,36.4 30.8,36.4 H27.3" fill="none" stroke="#fff" stroke-width="1.8"/>
<!-- save -->
<path d="M70.8,23.7 H93.2 V46 H73.5 L70.8,43.3 Z" fill="#d98fe5" stroke="#8a2f9c" stroke-width="1.4"/>
<rect x="75.8" y="23.7" width="12.2" height="8.2" fill="#fff" stroke="#8a2f9c" stroke-width="1.3"/>
<rect x="77" y="38.5" width="10.5" height="7.5" fill="#fff" stroke="#8a2f9c" stroke-width="1.3"/>
<!-- undo -->
<g fill="none" stroke="#9a9a9a" stroke-width="1.7" stroke-linecap="butt" stroke-linejoin="miter">
<path d="M114.6,23.3 V33.3 H124.6"/>
<path d="M115.3,32.6 C118.5,26 122.5,23.4 126.3,23.4 C131.5,23.4 135.6,27.3 135.6,31.5 C135.6,34.5 134,36.8 131.5,39.3 L122.8,46"/>
<path d="M193,23.3 V33.3 H183"/>
<path d="M192.3,32.6 C189.1,26 185.1,23.4 181.3,23.4 C176.1,23.4 172,27.3 172,31.5 C172,34.5 173.6,36.8 176.1,39.3 L184.8,46"/>
</g>
<g fill="none" stroke="#ababab" stroke-width="1.3">
<path d="M145.5,32.3 L149.2,36 L152.9,32.3"/>
<path d="M202.5,32.3 L206.2,36 L209.9,32.3"/>
</g>
<g fill="none" stroke="#1a1a1a" stroke-width="2" stroke-linecap="round" stroke-linejoin="round">
<path d="M235,32 H243.7"/>
<path d="M235.8,36 L239.3,39.3 L242.8,35.8"/>
</g>

<!-- Paste -->
<rect x="43.4" y="136" width="29.4" height="33.8" fill="#fdfaf2" stroke="#e3901f" stroke-width="2"/>
<rect x="45.3" y="137.8" width="25.6" height="30.2" fill="none" stroke="#f8d48e" stroke-width="1.2"/>
<path d="M48.9,140.4 V133.8 H53.5 C53.5,127.6 62.5,127.6 62.5,133.8 H67.3 V140.4 Z" fill="#fff" stroke="#777" stroke-width="1.4"/>
<rect x="62.9" y="148.1" width="19" height="24.5" fill="#f8f8f8" stroke="#3d3d3d" stroke-width="1.8"/>
<!-- scissors -->
<g fill="none" stroke="#9a9a9a" stroke-width="1.2">
<path d="M106.5,128.3 L114.6,146.5 M115.5,128.3 L107.2,146.5"/>
<circle cx="106.5" cy="149" r="2.5"/>
<circle cx="115.5" cy="149" r="2.5"/>
</g>
<!-- copy -->
<g stroke="#9a9a9a" stroke-width="1.5" fill="#f0f0f0">
<path d="M107.3,187.3 H99.8 V167.8 H107.4 L109.8,170.3" fill="#f2f2f2"/>
<path d="M108.8,171.9 H116.6 L122.2,177.6 V189.9 H108.8 Z"/>
<path d="M116.4,172 V177.6 H122" fill="#fff"/>
<path d="M112.2,182.9 H118.8 M112.2,185.8 H118.8" stroke-width="1.3"/>
</g>
<!-- format painter -->
<g stroke="#9a9a9a" stroke-width="1.3" stroke-linejoin="round">
<path d="M110.2,211.6 C106.5,213.2 102.8,214.6 99.4,216.6 L109.6,228 L117.2,219.1 Z" fill="#efefef"/>
<path d="M101.6,218.9 L114.4,222.2 L109.6,228 Z" fill="#d6d6d6"/>
<path d="M109.1,211.2 L111.5,208.8 L120.1,217.2 L117.6,219.6 Z" fill="#fff"/>
<path d="M115.9,212.6 L120.8,207.7" stroke-width="3.6" stroke-linecap="round"/>
<path d="M115.9,212.6 L120.8,207.7" stroke="#fff" stroke-width="1.1" stroke-linecap="round"/>
</g>
<!-- launcher clipboard -->
<g fill="none" stroke="#1a1a1a" stroke-width="1.8" stroke-linejoin="miter"><path d="M123.8,255.9 V245.9 H133.6"/><path d="M127.8,250.1 L133.8,256.1"/><path d="M134.0,249.5 V255.9 H127.39999999999999"/></g>
<path d="M54.7,212.7 L58.3,216.2 L61.9,212.7" fill="none" stroke="#242424" stroke-width="1.7"/>
</svg>
<svg width="1187" height="660" style="left:0;top:0" viewBox="0 0 1187 660">
<rect x="153.5" y="134.3" width="203" height="35.2" rx="5" fill="#efefef" stroke="#e2e2e2" stroke-width="1"/>
<rect x="360.5" y="134.3" width="58" height="35.2" rx="5" fill="#efefef" stroke="#e2e2e2" stroke-width="1"/>
<g fill="none" stroke="#9c9c9c" stroke-width="1.2">
<path d="M344.3,150.3 L348.2,154.4 L352.1,150.3"/>
<path d="M406.5,150.3 L410.4,154.4 L414.3,150.3"/>
</g>
<g fill="none" stroke="#9a9a9a" stroke-width="1.7" stroke-linejoin="miter">
<path d="M430.2,159.6 L437.9,140.6 L445.1,159.6 M432.6,153.2 H442.8"/>
<path d="M445.2,144.9 L448.2,141.8 L451.3,144.9" stroke-width="1.3"/>
<path d="M471.9,159.6 L477.6,144.8 L483.3,159.6 M473.7,154 H481.5"/>
<path d="M484,142.2 L487.3,145.4 L490.6,142.2" stroke-width="1.3"/>
<path d="M510.8,159.5 L518,140.6 L522.5,151.5 H515.2"/>
</g>
<g stroke="#a0a0a0" stroke-width="1.3" fill="none">
<path d="M520.2,158.5 L528.7,150 L533.2,154.5 L524.7,163 Z" fill="#f1f1f1"/>
<path d="M520.2,158.5 L523.4,155.3 L528,159.7 L524.7,163 Z" fill="#c8c8c8"/>
</g>
<rect x="500" y="134" width="1" height="35.5" fill="#dcdcdc"/>
<rect x="411" y="182.4" width="1" height="35.3" fill="#dcdcdc"/>
<rect x="478.3" y="182.4" width="1" height="35.3" fill="#dcdcdc"/>
<!-- Aa -->
<g fill="none" stroke="#9a9a9a" stroke-width="1.5">
<path d="M355.3,207.2 L360.8,192.6 L366.2,207.2 M357.1,202.2 H364.5"/>
<path d="M387.4,198.6 L391.2,202.3 L395,198.6" stroke-width="1.2"/>
<!-- AV -->
<path d="M421.8,201.3 L426.6,188.4 L432.4,201.3 M423.5,197.3 H430.7"/>
<path d="M433.8,188.4 L439.2,201.3 L444.6,188.4"/>
<path d="M422,206.6 H431.5 M424.8,203.6 L421.9,206.6 L424.8,209.6 M434.5,206.6 H444.3 M441.4,203.6 L444.3,206.6 L441.4,209.6" stroke-width="1.2"/>
<path d="M454.6,199 L458.4,202.5 L462.2,199" stroke-width="1.2"/>
<!-- font color -->
<path d="M494.3,204.3 L500.5,188.8 L506.5,204.3 M496.6,198.6 H504.2"/>
<path d="M524.8,199 L528.3,202.5 L531.8,199" stroke-width="1.2"/>
</g>
<rect x="488.2" y="206.2" width="23.6" height="5.5" fill="#b9b9b9"/>
<!-- launcher -->
<g fill="none" stroke="#bdbdbd" stroke-width="1.8" stroke-linejoin="miter"><path d="M534.9,255.8 V245.8 H544.6999999999999"/><path d="M538.9,250.0 L544.9,256.0"/><path d="M545.1,249.4 V255.8 H538.5"/></g>
</svg>

<svg width="1187" height="660" style="left:0;top:0" viewBox="0 0 1187 660">
<g fill="#a3a3a3">
<rect x="570.2" y="139.8" width="4.5" height="4.5"/>
<rect x="570.2" y="148.9" width="4.5" height="4.5"/>
<rect x="570.2" y="158" width="4.5" height="4.5"/>
</g>
<g fill="none" stroke="#a3a3a3" stroke-width="1.5">
<path d="M577.4,142 H592.6 M577.4,151.1 H592.6 M577.4,160.2 H592.6"/>
<path d="M640.4,142 H655.5 M640.4,151.1 H655.5 M640.4,160.2 H655.5"/>
<path d="M603.4,150.3 L607.3,154.4 L611.2,150.3" stroke-width="1.2"/>
<path d="M666.7,150.3 L670.6,154.4 L674.5,150.3" stroke-width="1.2"/>
<!-- decrease indent -->
<path d="M701.4,141.8 H722.8 M713.5,148.1 H722.8 M713.5,154 H722.8 M701.4,160 H722.8"/>
<path d="M702,151.1 H711 M705,148.1 L702,151.1 L705,154.1" stroke-width="1.3"/>
<path d="M740.2,141.8 H762 M752.3,148.1 H762 M752.3,154 H762 M740.2,160 H762"/>
<path d="M740.5,151.1 H749.5 M746.5,148.1 L749.5,151.1 L746.5,154.1" stroke-width="1.3"/>
<!-- columns -->
<path d="M785,147.3 H792 M785,151.4 H792 M785,155.5 H792 M795.8,147.3 H802.8 M795.8,151.4 H802.8 M795.8,155.5 H802.8" stroke-width="1.4"/>
<path d="M815.2,150.3 L819.1,154.4 L823,150.3" stroke-width="1.2"/>
<!-- align -->
<path d="M571.4,189.9 H592.6 M571.4,196 H586.5 M571.4,202 H592.6 M571.4,208.1 H586.5"/>
<path d="M610.4,189.9 H631.6 M613.4,196 H628.6 M610.4,202 H631.6 M613.4,208.1 H628.6"/>
<path d="M649.3,189.9 H670.6 M655.4,196 H670.6 M649.3,202 H670.6 M655.4,208.1 H670.6"/>
<path d="M688.5,189.9 H709.7 M688.5,196 H709.7 M688.5,202 H709.7 M688.5,208.1 H709.7"/>
<!-- para format -->
<path d="M793.3,188.6 H815.6 M793.3,194.8 H809.3 M793.3,200.7 H803.5 M793.3,206.7 H797.2"/>
<path d="M826.3,198.5 L830.1,202.4 L834,198.5" stroke-width="1.2"/>
</g>
<g fill="#a3a3a3" font-family="Liberation Sans" font-size="6.5">
<text x="633" y="145">1</text><text x="633" y="154.2">2</text><text x="633" y="163.3">3</text>
</g>
<g stroke="#a0a0a0" stroke-width="1.2" fill="#fff">
<path d="M815.4,196.6 C816.8,197.5 816.5,198.6 815.5,199.6 L805.5,208 L803.5,206 L812.8,197.2 C813.8,196.3 814.6,196.1 815.4,196.6 Z"/>
<path d="M803.3,205.5 C800.5,205.5 800,208.5 799.5,209.5 C799,210.8 798.3,211.1 797.6,211.2 C801,212.3 805.5,211 806,208.2 Z" fill="#c6c6c6"/>
</g>
<rect x="690" y="134" width="1" height="35.7" fill="#dcdcdc"/>
<rect x="772" y="134" width="1" height="35.7" fill="#dcdcdc"/>
<rect x="839" y="134" width="1" height="35.7" fill="#dcdcdc"/>
<rect x="720" y="182.3" width="1" height="35.2" fill="#dcdcdc"/>
<!-- line spacing -->
<g fill="none" stroke="#2b88d8" stroke-width="1.6">
<path d="M733.7,190.3 V198.5 M730.4,193.4 L733.7,190.1 L737,193.4"/>
<path d="M733.7,201.9 V209.8 M730.4,206.7 L733.7,210 L737,206.7"/>
</g>
<g fill="none" stroke="#333" stroke-width="1.9">
<path d="M740.5,190.1 H753.9 M740.5,196.1 H753.9 M740.5,202.1 H753.9 M740.5,208.2 H753.9"/>
<path d="M763.5,198.7 L767.2,202.3 L770.9,198.7" stroke-width="1.7"/>
</g>
<!-- pilcrow -->
<g fill="#333">
<path d="M861,143.2 H858.6 C855.4,143.2 853.2,145.6 853.2,148.3 C853.2,151.1 855.4,153.4 858.6,153.4 H861 Z"/>
<rect x="859.2" y="143.2" width="1.9" height="17.6"/>
<rect x="863.9" y="143.2" width="1.9" height="17.6"/>
<path d="M858,143 H868.8 L868,144.6 H858 Z"/>
</g>
<g fill="none" stroke="#bdbdbd" stroke-width="1.8" stroke-linejoin="miter"><path d="M874,255.8 V245.8 H883.8"/><path d="M878,250.0 L884,256.0"/><path d="M884.2,249.4 V255.8 H877.6"/></g>
</svg>

<svg width="1187" height="660" style="left:0;top:0" viewBox="0 0 1187 660">
<!-- styles icon -->
<g fill="none" stroke="#333" stroke-width="2.8" stroke-linejoin="bevel">
<path d="M914.6,167.4 L928.9,133.6 L939.4,158"/>
<path d="M920.5,155.2 H938.6"/>
</g>
<path d="M957.5,144.6 C958.8,145.8 958,147.5 956.5,149.3 L942.6,165.6 L938.6,162.1 L952.3,146.2 C954.1,144.4 956.2,143.4 957.5,144.6 Z" fill="#fff" stroke="#333" stroke-width="1.2"/>
<path d="M938.2,162.4 C933,162.5 931,166 928.8,168.5 C927.3,170 925.5,170 924.2,169.6 C926.5,172.5 931,174 935.5,172.8 C940,171.5 942.5,168.5 942.3,165.8 Z" fill="#70b2ea" stroke="#1f6fc0" stroke-width="1.1"/>
<path d="M929.8,210.6 L933.6,214.3 L937.4,210.6" fill="none" stroke="#242424" stroke-width="1.7"/>
<!-- text box icon -->
<rect x="1029.3" y="132.7" width="43.5" height="34.6" fill="#f9f9f9" stroke="#3a3a3a" stroke-width="1.5"/>
<g fill="#fff" stroke="#2b88d8" stroke-width="1.4">
<rect x="1027.2" y="130.6" width="4.2" height="4.2"/>
<rect x="1070.7" y="130.6" width="4.2" height="4.2"/>
<rect x="1027.2" y="165.2" width="4.2" height="4.2"/>
<rect x="1070.7" y="165.2" width="4.2" height="4.2"/>
</g>
<path d="M1043.2,160.2 L1051.1,140.2 L1059,160.2 M1045.8,153.3 H1056.4" fill="none" stroke="#2b88d8" stroke-width="2.3" stroke-linejoin="bevel"/>
<!-- picture online -->
<g fill="none" stroke="#333" stroke-width="1.8">
<path d="M1131.6,148.2 H1124.1 V132.1 H1145.7 V138.5"/>
<path d="M1124.1,141 L1129.6,135.6 L1132.9,139.3"/>
</g>
<circle cx="1141" cy="135.3" r="1.5" fill="#333"/>
<circle cx="1140.3" cy="145.1" r="7" fill="#2b88d8"/>
<g fill="none" stroke="#b9e0ff" stroke-width="1">
<ellipse cx="1140.3" cy="145.1" rx="2.6" ry="5.8"/>
<path d="M1134,142.7 H1146.6 M1134,147.5 H1146.6"/>
</g>
<!-- table -->
<rect x="1123.9" y="167.9" width="22.3" height="22" fill="#fff" stroke="#444" stroke-width="1.5"/>
<rect x="1124.6" y="168.6" width="21" height="4" fill="#a8a8a8"/>
<g stroke="#666" stroke-width="1.3" fill="none">
<path d="M1124,178.4 H1146.2 M1124,184.2 H1146.2 M1131.4,172.6 V190 M1138.7,172.6 V190"/>
</g>
<path d="M1124,172.6 H1146.2" stroke="#555" stroke-width="1.2"/>
<g fill="none" stroke="#242424" stroke-width="1.6">
<path d="M1156.3,178 L1160.3,181.8 L1164.3,178"/>
<path d="M1156.3,216.7 L1160.3,220.5 L1164.3,216.7"/>
</g>
<!-- shapes -->
<rect x="1123.9" y="206.9" width="15" height="14.8" fill="#7db8ec" stroke="#2a78cc" stroke-width="1.5"/>
<circle cx="1138.9" cy="221.6" r="7.6" fill="#f4f4f4" stroke="#fff" stroke-width="3.2"/>
<circle cx="1138.9" cy="221.6" r="7.3" fill="#f4f4f4" stroke="#333" stroke-width="1.5"/>
</svg>

<div class="t" style="left:160.89px;top:188.98px;font-size:21.51px;font-weight:bold;font-style:normal;color:#9c9c9c;transform:scaleX(1.1790);">N</div>
<div class="t" style="left:202.91px;top:188.98px;font-size:21.51px;font-weight:normal;font-style:italic;color:#9c9c9c;transform:scaleX(0.9194);">K</div>
<div class="t" style="left:243.08px;top:188.98px;font-size:21.51px;font-weight:normal;font-style:normal;color:#9c9c9c;transform:scaleX(0.7406);">S</div>
<div class="a" style="left:243px;top:207px;width:12px;height:1.6px;background:#9c9c9c"></div>
<div class="t" style="left:282.76px;top:188.61px;font-size:20.64px;font-weight:bold;font-style:normal;color:#9c9c9c;transform:scaleX(0.8970);">x</div>
<div class="t" style="left:293.55px;top:202.58px;font-size:10.89px;font-weight:normal;font-style:normal;color:#9c9c9c;transform:scaleX(1.0093);">2</div>
<div class="t" style="left:321.86px;top:188.61px;font-size:20.64px;font-weight:bold;font-style:normal;color:#9c9c9c;transform:scaleX(0.8970);">x</div>
<div class="t" style="left:332.34px;top:186.56px;font-size:11.03px;font-weight:normal;font-style:normal;color:#9c9c9c;transform:scaleX(1.0161);">2</div>
<div class="t" style="left:369.44px;top:191.74px;font-size:18.25px;font-weight:normal;font-style:normal;color:#9c9c9c;transform:scaleX(0.8513);">a</div>
</body></html>
